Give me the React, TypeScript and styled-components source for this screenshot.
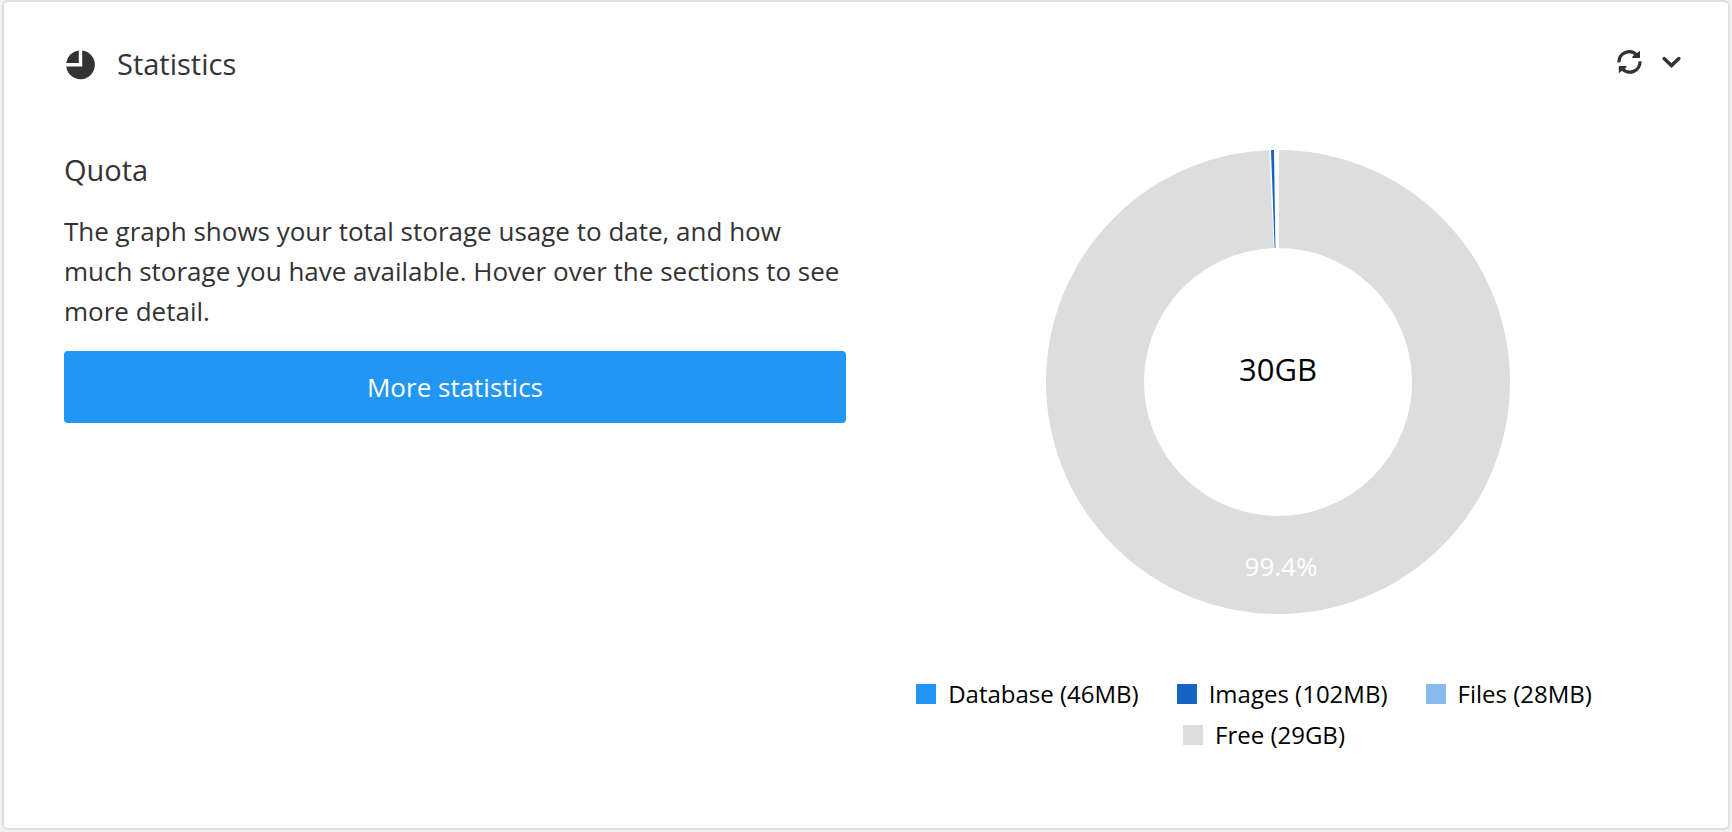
import React from "react";
import styled, { createGlobalStyle } from "styled-components";

const GlobalStyle = createGlobalStyle`
  * { box-sizing: border-box; }
  body {
    margin: 0;
    background: #f1f1f1;
    color: #333;
    font-family: "Open Sans", "Liberation Sans", sans-serif;
  }
`;

const Page = styled.main`
  display: flex;
  min-height: 100vh;
  padding: 0 2px 2px;
`;

const Card = styled.section`
  flex: 1;
  padding: 41px 60px 60px;
  background: #fff;
  border: 2px solid #dedede;
  border-radius: 6px;
`;

const Header = styled.header`
  display: flex;
  align-items: center;
  justify-content: space-between;
  margin-bottom: 64px;
  margin-right: -16px;
`;

const Title = styled.h2`
  display: flex;
  align-items: center;
  gap: 22px;
  margin: 0;
  font-size: 29px;
  line-height: 42px;
  font-weight: 400;
`;

const Actions = styled.div`
  display: flex;
  gap: 16px;
  padding-bottom: 4px;
`;

const IconButton = styled.button`
  display: flex;
  padding: 0;
  border: 0;
  background: none;
  color: #333;
  cursor: pointer;
`;

const Columns = styled.div`
  display: grid;
  grid-template-columns: 1fr 1fr;
  gap: 40px;
`;

const Subtitle = styled.h3`
  margin: 0 0 20px;
  font-size: 29px;
  line-height: 42px;
  font-weight: 400;
`;

const Text = styled.p`
  margin: 0 0 20px;
  font-size: 26px;
  line-height: 40px;
`;

const MoreButton = styled.button`
  width: 100%;
  height: 72px;
  border: 0;
  border-radius: 4px;
  background: #2196f3;
  color: #fff;
  font: inherit;
  font-size: 26px;
  cursor: pointer;
`;

const Chart = styled.figure`
  display: flex;
  flex-direction: column;
  align-items: center;
  margin: 0;
`;

const Donut = styled.svg`
  display: block;
  width: 466px;
  max-width: 100%;
  font-family: inherit;
`;

const Legend = styled.figcaption`
  display: flex;
  flex-direction: column;
  align-items: center;
  margin-top: 58px;
  padding-right: 26px;
  color: #000;
  font-size: 24px;
  line-height: 41px;
`;

const LegendRow = styled.div<{ $inset?: number }>`
  display: flex;
  gap: 38px;
  padding-right: ${(p) => p.$inset ?? 0}px;
`;

const LegendItem = styled.span<{ $color: string }>`
  display: flex;
  align-items: center;
  gap: 12px;
  white-space: nowrap;

  &::before {
    content: "";
    width: 20px;
    height: 20px;
    background: ${(p) => p.$color};
  }
`;

const PieIcon = () => (
  <svg width="31" height="31" viewBox="0 0 31 31" aria-hidden="true">
    <path d="M18.2 1.5A14.4 14.4 0 1 1 2.2 17.6H18.2Z" fill="#333" />
    <path d="M14.8 1.5V14H2.2A14.4 14.4 0 0 1 14.8 1.5Z" fill="#333" />
  </svg>
);

const RefreshIcon = () => (
  <svg width="26" height="26" viewBox="0 0 26 26" aria-hidden="true">
    <g fill="none" stroke="currentColor" strokeWidth="3.3">
      <path d="M3 13.4A10.2 10.2 0 0 1 20.9 6.3" />
      <path d="M24 12.4A10.2 10.2 0 0 1 6.1 19.6" />
    </g>
    <path d="M24 1.8V9H16.4V7.4Z" fill="currentColor" />
    <path d="M2.8 24.2V17H10.4V18.6Z" fill="currentColor" />
  </svg>
);

const ChevronIcon = () => (
  <svg width="26" height="26" viewBox="0 0 26 26" aria-hidden="true">
    <path
      d="M6.1 9.6L13.5 16.6L20.9 9.6"
      fill="none"
      stroke="currentColor"
      strokeWidth="3.5"
      strokeLinecap="round"
    />
  </svg>
);

export default function App() {
  return (
    <>
      <GlobalStyle />
      <Page>
        <Card>
          <Header>
            <Title>
              <PieIcon />
              Statistics
            </Title>
            <Actions>
              <IconButton type="button" aria-label="Refresh">
                <RefreshIcon />
              </IconButton>
              <IconButton type="button" aria-label="Collapse">
                <ChevronIcon />
              </IconButton>
            </Actions>
          </Header>
          <Columns>
            <div>
              <Subtitle>Quota</Subtitle>
              <Text>
                The graph shows your total storage usage to date, and how much
                storage you have available. Hover over the sections to see more
                detail.
              </Text>
              <MoreButton type="button">More statistics</MoreButton>
            </div>
            <Chart>
              <Donut viewBox="0 0 466 466" role="img" aria-label="Storage quota">
                <circle cx="234" cy="233" r="183" fill="none" stroke="#ddd" strokeWidth="98" />
                <path d="M225 0H235V103H230Z" fill="#fff" />
                <path d="M227 1H230L231.4 99H230.6Z" fill="#1565c0" />
                <text x="234" y="232" fontSize="31" textAnchor="middle" fill="#000">
                  30GB
                </text>
                <text x="237" y="427" fontSize="26" textAnchor="middle" fill="#fff">
                  99.4%
                </text>
              </Donut>
              <Legend>
                <LegendRow $inset={20}>
                  <LegendItem $color="#2196f3">Database (46MB)</LegendItem>
                  <LegendItem $color="#1565c0">Images (102MB)</LegendItem>
                  <LegendItem $color="#86b9ee">Files (28MB)</LegendItem>
                </LegendRow>
                <LegendRow>
                  <LegendItem $color="#ddd">Free (29GB)</LegendItem>
                </LegendRow>
              </Legend>
            </Chart>
          </Columns>
        </Card>
      </Page>
    </>
  );
}
